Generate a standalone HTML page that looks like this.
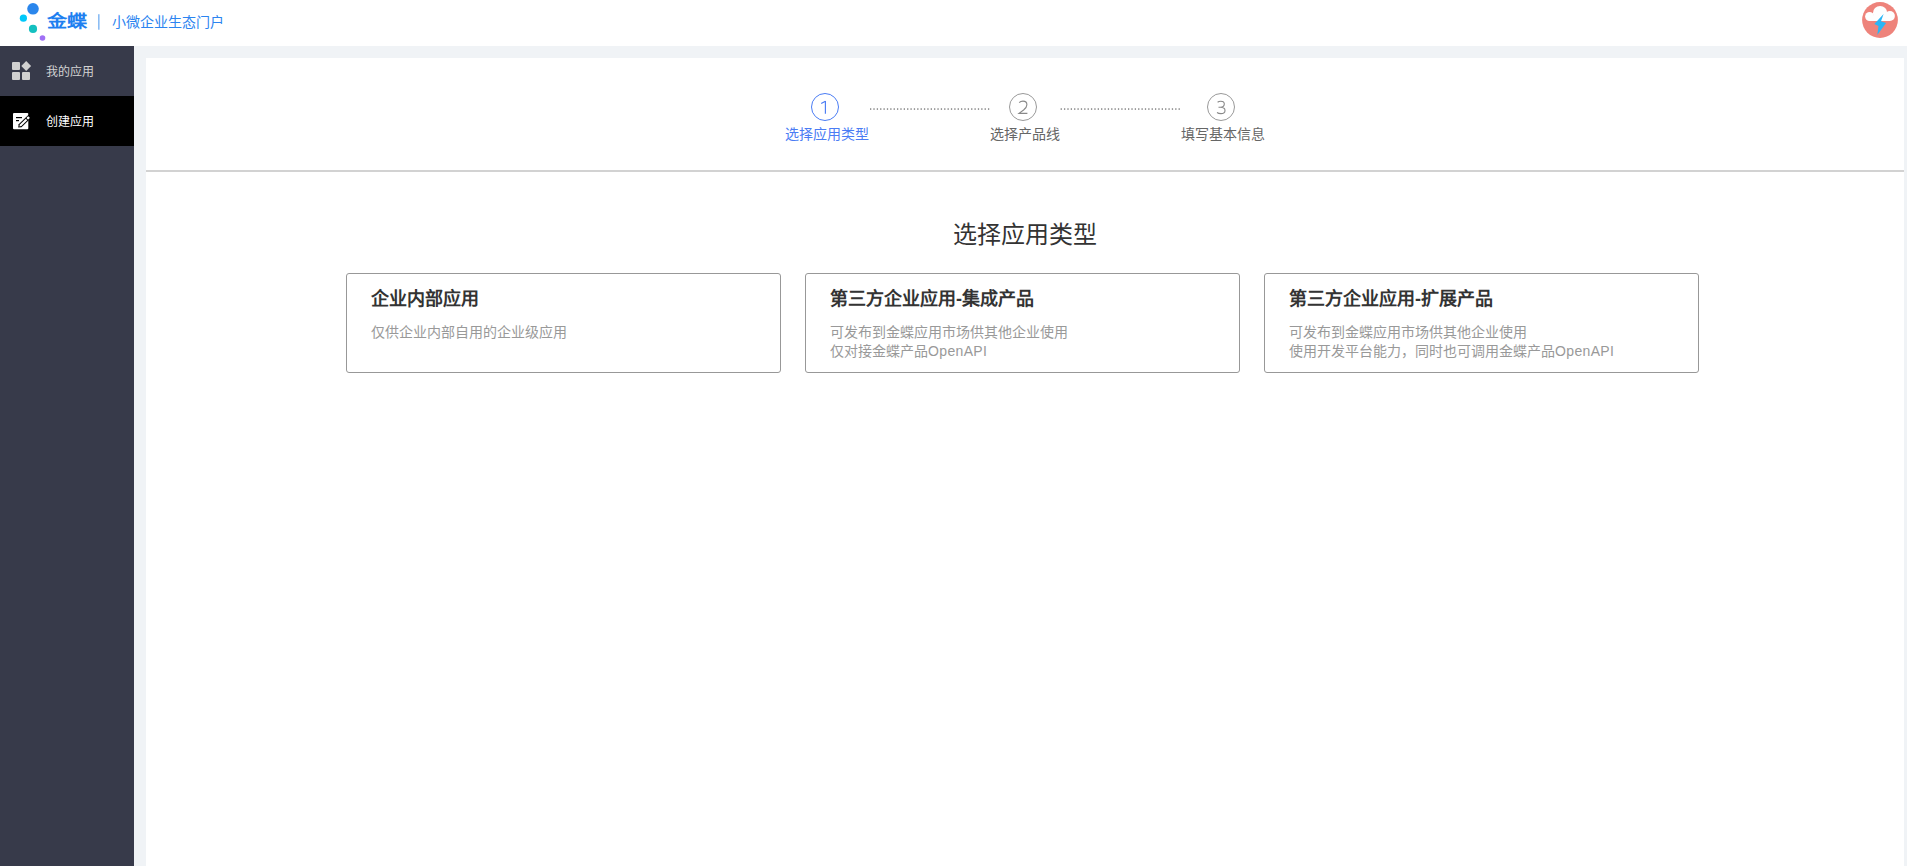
<!DOCTYPE html>
<html lang="zh-CN"><head><meta charset="utf-8">
<style>
*{margin:0;padding:0;box-sizing:border-box}
html,body{width:1907px;height:866px;overflow:hidden;background:#f0f3f6;font-family:"Liberation Sans",sans-serif}
.abs{position:absolute}
#hdr{left:0;top:0;width:1907px;height:46px;background:#fff}
#side{left:0;top:46px;width:134px;height:820px;background:#373a4a}
#act{left:0;top:96px;width:134px;height:50px;background:#000}
.mi{position:absolute;left:46px;font-size:12px;line-height:16px;white-space:nowrap}
#panel{left:146px;top:58px;width:1758px;height:808px;background:#fff}
#divider{left:146px;top:170px;width:1758px;height:2px;background:#d2d2d2}
.circ{position:absolute;width:28px;height:28px;border-radius:50%;border:1px solid #999;top:93px;font-size:18px;line-height:26px;text-align:center;color:#888}
.slbl{position:absolute;top:125px;font-size:14px;line-height:18px;color:#666;white-space:nowrap;text-align:center;width:120px}
.dots{position:absolute;top:108px;height:2px;background:repeating-linear-gradient(90deg,#a0a0a0 0 1px,transparent 1px 3px)}
#title{left:146px;top:220px;width:1758px;text-align:center;font-size:24px;line-height:30px;color:#333}
.card{position:absolute;top:273px;width:435px;height:100px;border:1px solid #989898;border-radius:3px;background:#fff}
.ct{position:absolute;left:24px;top:13px;font-size:18px;line-height:24px;font-weight:bold;color:#333;white-space:nowrap}
.cd{position:absolute;left:24px;top:49px;font-size:14px;line-height:19px;color:#999;white-space:nowrap}
</style></head><body>
<div id="hdr" class="abs"></div>
<!-- logo -->
<svg class="abs" style="left:0;top:0" width="100" height="46" viewBox="0 0 100 46">
  <circle cx="33" cy="8.8" r="5.8" fill="#2a86ec"/>
  <circle cx="23.4" cy="18.2" r="3.6" fill="#00c8fa"/>
  <circle cx="33" cy="28.9" r="4.1" fill="#14c0c0"/>
  <circle cx="42.5" cy="38" r="2.8" fill="#a070f5"/>
  <rect x="98" y="14.2" width="1.6" height="15.5" fill="#8cbdf4"/>
</svg>
<div class="abs" style="left:47px;top:9px;font-size:19px;line-height:24px;font-weight:bold;color:#1e7ff0;white-space:nowrap;transform:scale(1.06,0.9);transform-origin:0 20px">金蝶</div>
<div class="abs" style="left:112px;top:13px;font-size:14px;line-height:18px;color:#2c84f0;white-space:nowrap">小微企业生态门户</div>
<!-- avatar -->
<svg class="abs" style="left:1862px;top:2px" width="36" height="36" viewBox="0 0 36 36">
  <circle cx="18" cy="18" r="17.9" fill="#ee837b"/>
  <circle cx="7.6" cy="14.5" r="4.5" fill="#fefefe"/>
  <circle cx="18.1" cy="11.2" r="7.2" fill="#fefefe"/>
  <circle cx="27.9" cy="14" r="5" fill="#fefefe"/>
  <rect x="7.6" y="14" width="20.3" height="5" fill="#fefefe"/>
  <path d="M21.6 11.9 L12.3 22 L16.5 23.9 L15.3 33.1 L24.1 21.1 L19 19.2 Z" fill="#29b6f6"/>
</svg>

<div id="side" class="abs"></div>
<div id="act" class="abs"></div>
<svg class="abs" style="left:0;top:46px" width="40" height="100" viewBox="0 46 40 100">
  <rect x="12" y="62" width="8" height="8" rx="1" fill="#d0d0d0"/>
  <rect x="12" y="72" width="8" height="8" rx="1" fill="#d0d0d0"/>
  <rect x="22" y="72" width="8" height="8" rx="1" fill="#d0d0d0"/>
  <path d="M26.2 61 L31.1 66 L26.2 71 L21.3 66 Z" fill="#d0d0d0"/>
  <rect x="13" y="113" width="15.3" height="16.3" rx="1" fill="#fff"/>
  <rect x="16" y="117" width="6" height="1.2" fill="#000"/>
  <rect x="16" y="120" width="3" height="1.2" fill="#000"/>
  <g transform="translate(18.2 127.6) rotate(-44)">
    <path d="M0 0 L2.6 -2 L17 -2 L17 2 L2.6 2 Z" fill="#000"/>
    <path d="M1.5 0 L3.4 -1.05 L11.6 -1.05 L11.6 1.05 L3.4 1.05 Z" fill="#fff"/>
    <rect x="12.6" y="-1.2" width="2.6" height="2.4" rx="0.6" fill="#fff"/>
  </g>
</svg>
<div class="mi" style="top:64px;color:#d2d2d2">我的应用</div>
<div class="mi" style="top:114px;color:#fff">创建应用</div>

<div id="panel" class="abs"></div>
<!-- steps -->
<svg class="abs" style="left:811px;top:93px" width="28" height="28" viewBox="0 0 28 28"><circle cx="14" cy="14" r="13.5" fill="none" stroke="#4a7cf4" stroke-width="1"/><path d="M14.4 8 L14.4 20.8 M10.2 10.6 L14.4 8.3" fill="none" stroke="#4a7cf4" stroke-width="1.15"/></svg>
<svg class="abs" style="left:1009px;top:93px" width="28" height="28" viewBox="0 0 28 28"><circle cx="14" cy="14" r="13.5" fill="none" stroke="#999" stroke-width="1"/><path d="M10.2 9.6 C11.1 8.6 12.4 8.1 14 8.1 C16.4 8.1 17.9 9.5 17.9 11.7 C17.9 13.5 16.9 15 14.6 17 L10 20.4 L18.4 20.4" fill="none" stroke="#888" stroke-width="1.1"/></svg>
<svg class="abs" style="left:1207px;top:93px" width="28" height="28" viewBox="0 0 28 28"><circle cx="14" cy="14" r="13.5" fill="none" stroke="#999" stroke-width="1"/><path d="M10.6 9.2 C11.5 8.5 12.6 8.3 13.8 8.3 C16 8.3 17.3 9.5 17.3 11.1 C17.3 13 15.8 14.2 13.4 14.2 L11.5 14.2 M13.4 14.2 C16.3 14.2 18 15.6 18 17.4 C18 19.4 16.3 20.6 13.9 20.6 C12.4 20.6 11 20.2 10 19.5" fill="none" stroke="#888" stroke-width="1.1"/></svg>
<div class="slbl" style="left:767px;color:#4a7cf4">选择应用类型</div>
<div class="slbl" style="left:965px">选择产品线</div>
<div class="slbl" style="left:1163px">填写基本信息</div>
<svg class="abs" style="left:869px;top:108px" width="125" height="3" fill="#808080"><rect x="1.00" y="0.3" width="1.3" height="1.5"/><rect x="4.37" y="0.3" width="1.3" height="1.5"/><rect x="7.74" y="0.3" width="1.3" height="1.5"/><rect x="11.11" y="0.3" width="1.3" height="1.5"/><rect x="14.48" y="0.3" width="1.3" height="1.5"/><rect x="17.85" y="0.3" width="1.3" height="1.5"/><rect x="21.22" y="0.3" width="1.3" height="1.5"/><rect x="24.59" y="0.3" width="1.3" height="1.5"/><rect x="27.96" y="0.3" width="1.3" height="1.5"/><rect x="31.33" y="0.3" width="1.3" height="1.5"/><rect x="34.70" y="0.3" width="1.3" height="1.5"/><rect x="38.07" y="0.3" width="1.3" height="1.5"/><rect x="41.44" y="0.3" width="1.3" height="1.5"/><rect x="44.81" y="0.3" width="1.3" height="1.5"/><rect x="48.18" y="0.3" width="1.3" height="1.5"/><rect x="51.55" y="0.3" width="1.3" height="1.5"/><rect x="54.92" y="0.3" width="1.3" height="1.5"/><rect x="58.29" y="0.3" width="1.3" height="1.5"/><rect x="61.66" y="0.3" width="1.3" height="1.5"/><rect x="65.03" y="0.3" width="1.3" height="1.5"/><rect x="68.40" y="0.3" width="1.3" height="1.5"/><rect x="71.77" y="0.3" width="1.3" height="1.5"/><rect x="75.14" y="0.3" width="1.3" height="1.5"/><rect x="78.51" y="0.3" width="1.3" height="1.5"/><rect x="81.88" y="0.3" width="1.3" height="1.5"/><rect x="85.25" y="0.3" width="1.3" height="1.5"/><rect x="88.62" y="0.3" width="1.3" height="1.5"/><rect x="91.99" y="0.3" width="1.3" height="1.5"/><rect x="95.36" y="0.3" width="1.3" height="1.5"/><rect x="98.73" y="0.3" width="1.3" height="1.5"/><rect x="102.10" y="0.3" width="1.3" height="1.5"/><rect x="105.47" y="0.3" width="1.3" height="1.5"/><rect x="108.84" y="0.3" width="1.3" height="1.5"/><rect x="112.21" y="0.3" width="1.3" height="1.5"/><rect x="115.58" y="0.3" width="1.3" height="1.5"/><rect x="118.95" y="0.3" width="1.3" height="1.5"/></svg>
<svg class="abs" style="left:1059px;top:108px" width="125" height="3" fill="#808080"><rect x="1.60" y="0.3" width="1.3" height="1.5"/><rect x="4.97" y="0.3" width="1.3" height="1.5"/><rect x="8.34" y="0.3" width="1.3" height="1.5"/><rect x="11.71" y="0.3" width="1.3" height="1.5"/><rect x="15.08" y="0.3" width="1.3" height="1.5"/><rect x="18.45" y="0.3" width="1.3" height="1.5"/><rect x="21.82" y="0.3" width="1.3" height="1.5"/><rect x="25.19" y="0.3" width="1.3" height="1.5"/><rect x="28.56" y="0.3" width="1.3" height="1.5"/><rect x="31.93" y="0.3" width="1.3" height="1.5"/><rect x="35.30" y="0.3" width="1.3" height="1.5"/><rect x="38.67" y="0.3" width="1.3" height="1.5"/><rect x="42.04" y="0.3" width="1.3" height="1.5"/><rect x="45.41" y="0.3" width="1.3" height="1.5"/><rect x="48.78" y="0.3" width="1.3" height="1.5"/><rect x="52.15" y="0.3" width="1.3" height="1.5"/><rect x="55.52" y="0.3" width="1.3" height="1.5"/><rect x="58.89" y="0.3" width="1.3" height="1.5"/><rect x="62.26" y="0.3" width="1.3" height="1.5"/><rect x="65.63" y="0.3" width="1.3" height="1.5"/><rect x="69.00" y="0.3" width="1.3" height="1.5"/><rect x="72.37" y="0.3" width="1.3" height="1.5"/><rect x="75.74" y="0.3" width="1.3" height="1.5"/><rect x="79.11" y="0.3" width="1.3" height="1.5"/><rect x="82.48" y="0.3" width="1.3" height="1.5"/><rect x="85.85" y="0.3" width="1.3" height="1.5"/><rect x="89.22" y="0.3" width="1.3" height="1.5"/><rect x="92.59" y="0.3" width="1.3" height="1.5"/><rect x="95.96" y="0.3" width="1.3" height="1.5"/><rect x="99.33" y="0.3" width="1.3" height="1.5"/><rect x="102.70" y="0.3" width="1.3" height="1.5"/><rect x="106.07" y="0.3" width="1.3" height="1.5"/><rect x="109.44" y="0.3" width="1.3" height="1.5"/><rect x="112.81" y="0.3" width="1.3" height="1.5"/><rect x="116.18" y="0.3" width="1.3" height="1.5"/><rect x="119.55" y="0.3" width="1.3" height="1.5"/></svg>
<div id="divider" class="abs"></div>

<div id="title" class="abs">选择应用类型</div>

<div class="card" style="left:346px">
  <div class="ct">企业内部应用</div>
  <div class="cd">仅供企业内部自用的企业级应用</div>
</div>
<div class="card" style="left:805px">
  <div class="ct">第三方企业应用-集成产品</div>
  <div class="cd">可发布到金蝶应用市场供其他企业使用<br>仅对接金蝶产品<span style="letter-spacing:0.35px">OpenAPI</span></div>
</div>
<div class="card" style="left:1264px">
  <div class="ct">第三方企业应用-扩展产品</div>
  <div class="cd">可发布到金蝶应用市场供其他企业使用<br>使用开发平台能力，同时也可调用金蝶产品<span style="letter-spacing:0.35px">OpenAPI</span></div>
</div>
</body></html>
